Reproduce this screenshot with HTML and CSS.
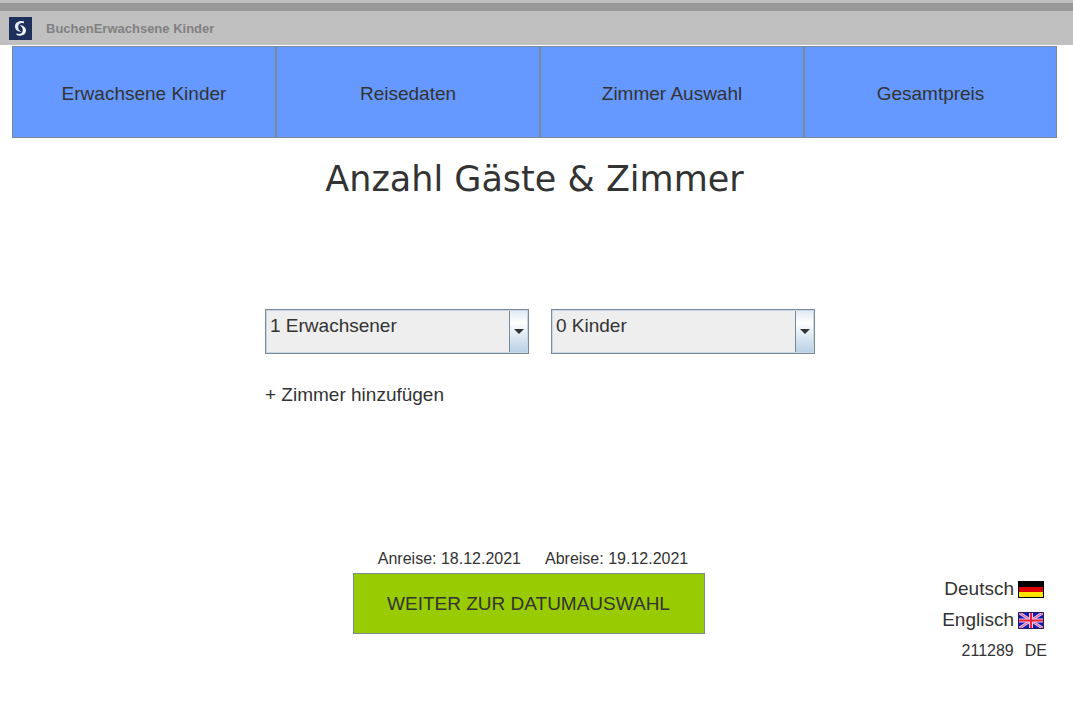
FILE: index.html
```html
<!DOCTYPE html>
<html lang="de">
<head>
<meta charset="utf-8">
<meta name="viewport" content="width=device-width, initial-scale=1">
<title>BuchenErwachsene Kinder</title>
<link rel="stylesheet" href="styles.css">
</head>
<body>
<header class="titlebar">
  <svg class="logo" viewBox="0 0 23 23" aria-hidden="true">
    <rect width="23" height="23" fill="#1f2f5c"/>
    <path d="M15 4.500C10 3 6 5.500 6 9.500C6 13 9 14.500 12.500 15C10 13.500 8.800 11.500 9.300 9C9.800 6.500 12 5.500 15 6.500Z" fill="#dfe7f5"/>
    <path d="M7.500 18C12.500 20 17 17.500 17 13.500C17 10 14 8.500 10.500 8C13 9.500 14.200 11.500 13.700 14C13.200 16.500 11 17.500 7.500 16.500Z" fill="#f4f7fc"/>
  </svg>
  <span>BuchenErwachsene Kinder</span>
</header>
<nav class="steps">
  <button type="button">Erwachsene Kinder</button>
  <button type="button">Reisedaten</button>
  <button type="button">Zimmer Auswahl</button>
  <button type="button">Gesamtpreis</button>
</nav>
<main class="page">
  <h1>Anzahl Gäste &amp; Zimmer</h1>
  <section class="guests">
    <div class="selects">
      <label class="combo">
        <select aria-label="Erwachsene"><option>1 Erwachsener</option><option>2 Erwachsene</option></select>
      </label>
      <label class="combo">
        <select aria-label="Kinder"><option>0 Kinder</option><option>1 Kind</option></select>
      </label>
    </div>
    <button type="button" class="add">+ Zimmer hinzufügen</button>
  </section>
  <section class="next">
    <p class="dates"><span>Anreise: 18.12.2021</span><span>Abreise: 19.12.2021</span></p>
    <button type="button" class="go">WEITER ZUR DATUMAUSWAHL</button>
  </section>
</main>
<footer class="languages">
  <button type="button" class="language">Deutsch
    <svg class="flag" viewBox="0 0 26 17" aria-hidden="true">
      <path fill="#000" d="M0 0h26v17H0z"/><path fill="#e00000" d="M1 6h24v5H1z"/><path fill="#ffe600" d="M1 11h24v5H1z"/>
    </svg>
  </button>
  <button type="button" class="language">Englisch
    <svg class="flag" viewBox="0 0 26 17" aria-hidden="true">
      <path fill="#1616b0" d="M0 0h26v17H0z"/>
      <path stroke="#d8c0f0" stroke-width="3" d="M0 0l26 17M26 0L0 17"/>
      <path stroke="#f05070" stroke-width="1" d="M0 0l26 17M26 0L0 17"/>
      <path stroke="#e8c8ec" stroke-width="4" d="M13 0v17M0 8.500h26"/>
      <path stroke="#f02038" stroke-width="2" d="M13 0v17M0 8.500h26"/>
      <path fill="none" stroke="#202060" d="M.5.5h25v16H.5z"/>
    </svg>
  </button>
  <p class="session"><span>211289</span><span class="code">DE</span></p>
</footer>
</body>
</html>
```
FILE: styles.css
```css
* {
  box-sizing: border-box;
}

body {
  margin: 0;
  min-height: 100vh;
  display: flex;
  flex-direction: column;
  background: #fff;
  color: #333;
  font: 19px/24px "Liberation Sans", Arial, sans-serif;
}

button {
  padding: 0;
  border: 0;
  background: none;
  color: inherit;
  font: inherit;
  cursor: pointer;
}

h1,
p {
  margin: 0;
}

.titlebar {
  display: flex;
  align-items: center;
  gap: 14px;
  padding: 17px 9px 5px;
  background: linear-gradient(#c0c0c0 3px, #999 3px, #999 11px, #c0c0c0 11px);
  color: #808080;
  font-size: 13px;
  font-weight: bold;
  line-height: 23px;
}

.logo {
  width: 23px;
  height: 23px;
}

.steps {
  display: grid;
  grid-template-columns: 264fr 264fr 264fr 253fr;
  margin: 1px 16px 0 12px;
}

.steps button {
  padding: 35px 0 31px;
  border: 1px solid #7a8a99;
  background: #69f;
}

.page {
  display: flex;
  flex-direction: column;
  align-items: center;
}

h1 {
  margin: 20px 4px 0 0;
  font: 35px/42px "DejaVu Sans", Verdana, sans-serif;
}

.guests {
  width: 550px;
  max-width: 100%;
  margin: 109px 0 0 7px;
}

.selects {
  display: grid;
  grid-template-columns: 1fr 1fr;
  gap: 22px;
  margin-bottom: 29px;
}

.combo {
  position: relative;
  display: block;
}

.combo::after {
  content: "";
  position: absolute;
  top: 20px;
  right: 5px;
  border: 5px solid transparent;
  border-top-color: #333;
  border-bottom: 0;
  pointer-events: none;
}

select {
  display: block;
  appearance: none;
  width: 100%;
  height: 45px;
  padding: 0 24px 11px 4px;
  border: 1px solid #7a8a99;
  border-radius: 0;
  background:
    linear-gradient(#7a8a99, #7a8a99) right 18px top / 1px 100% no-repeat,
    linear-gradient(#dde8f3, #fff 30%, #e8f0f7 50%, #b8cfe5) right / 18px 100% no-repeat,
    #eee;
  box-shadow: inset 0 0 0 1px #c6d6e6;
  color: inherit;
  font: inherit;
}

.next {
  width: 352px;
  margin: 140px 16px 0 0;
}

.dates {
  display: flex;
  justify-content: center;
  gap: 24px;
  margin-left: 9px;
  font-size: 16px;
  white-space: nowrap;
}

.go {
  display: block;
  width: 100%;
  margin-top: 2px;
  padding: 18px 0 17px;
  border: 1px solid #7a8a99;
  background: #9c0;
}

.languages {
  display: flex;
  flex-direction: column;
  align-items: flex-end;
  gap: 7px;
  margin-top: auto;
  padding: 0 26px 39px 0;
}

.language {
  display: flex;
  align-items: center;
  gap: 4px;
  margin-right: 3px;
}

.flag {
  width: 26px;
  height: 17px;
}

.session {
  display: flex;
  gap: 11px;
  font-size: 16px;
}

/* The footer shares its rows with the call to action. */
@media (min-width: 800px) {
  .languages {
    margin-top: -57px;
    align-self: flex-end;
  }
}
```
